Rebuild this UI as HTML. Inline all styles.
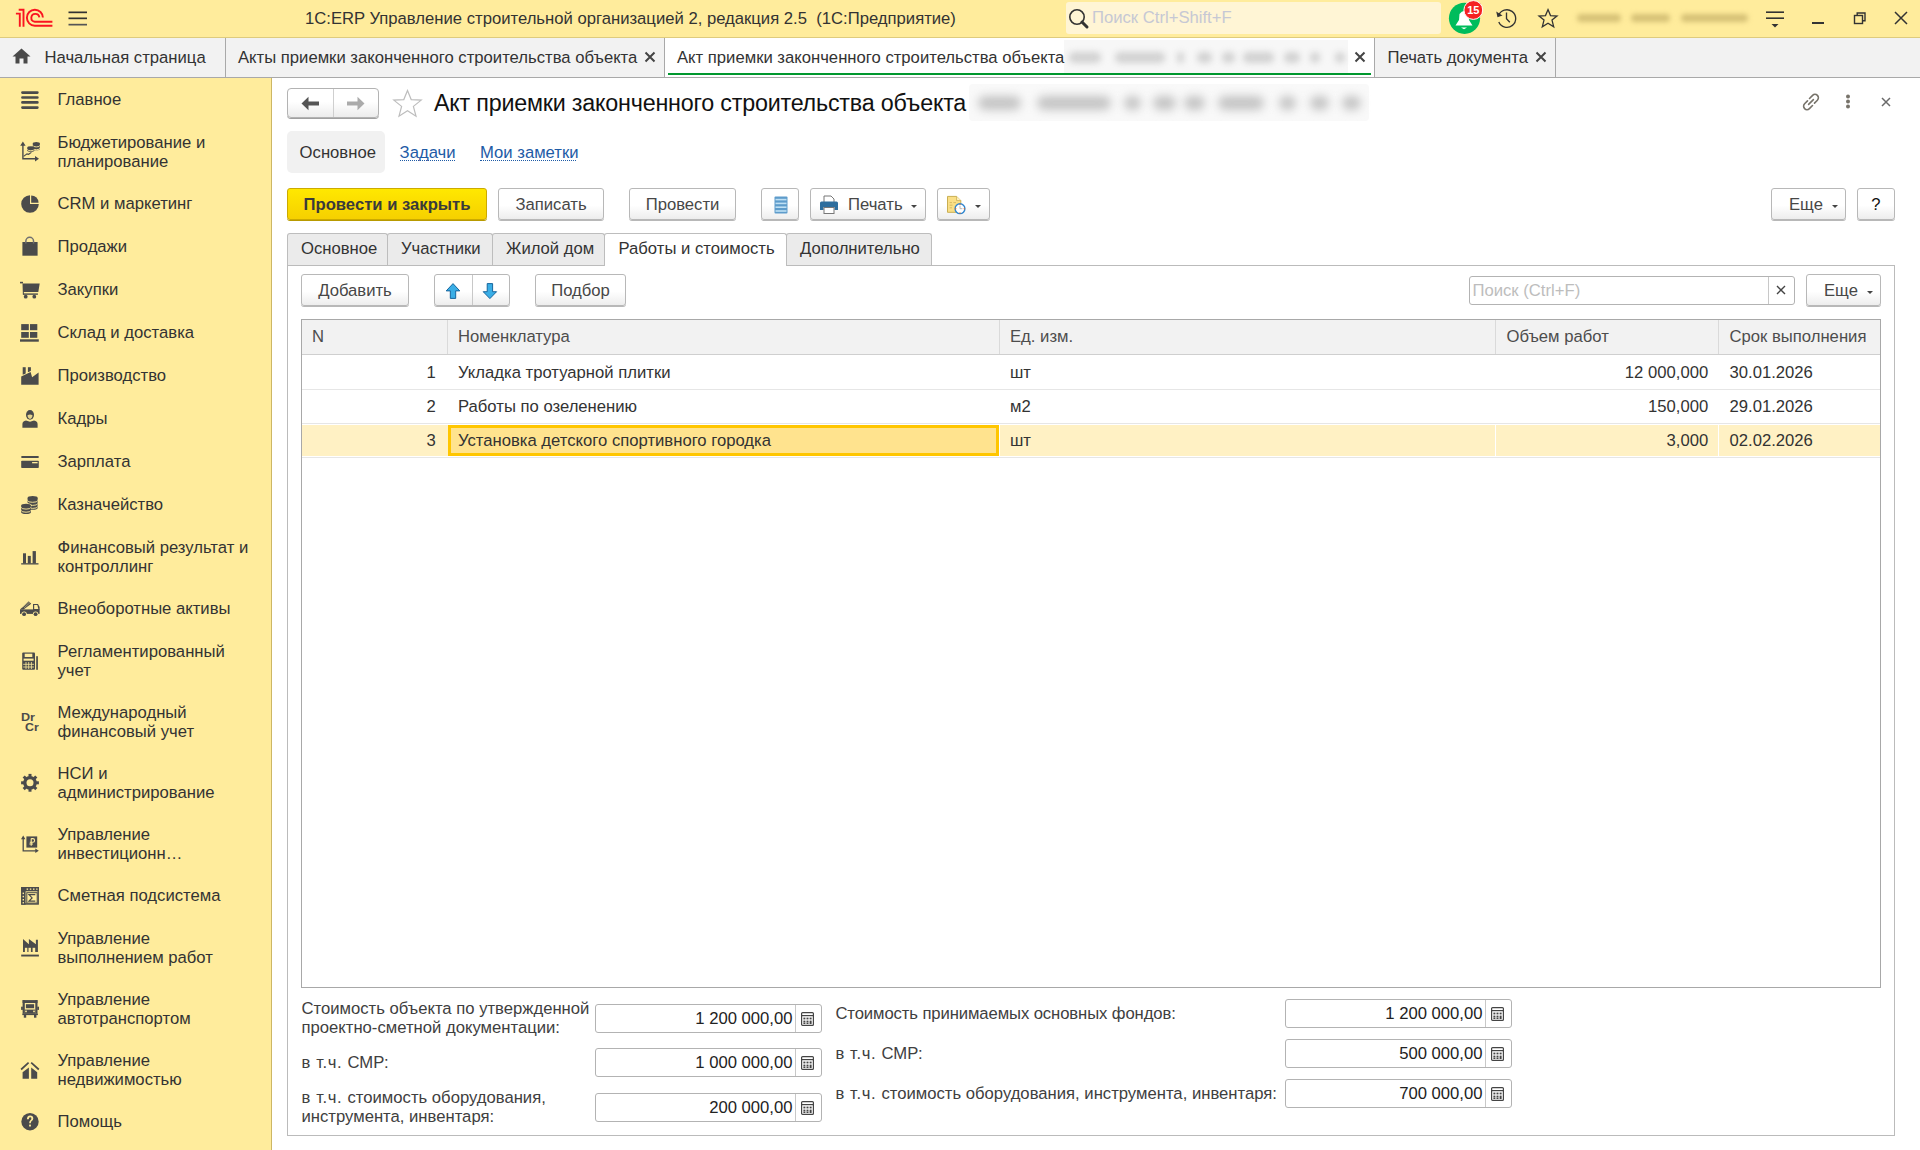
<!DOCTYPE html>
<html><head><meta charset="utf-8">
<style>
*{box-sizing:border-box}
html,body{margin:0;padding:0}
body{width:1920px;height:1150px;position:relative;overflow:hidden;font-family:"Liberation Sans",sans-serif;font-size:16.67px;color:#333;background:#fff}
.a{position:absolute;white-space:nowrap}
.t{position:absolute;white-space:nowrap;line-height:19px}
#top{position:absolute;left:0;top:0;width:1920px;height:38px;background:#FFEC9C;border-bottom:1px solid #DECB7E}
#tabs{position:absolute;left:0;top:38px;width:1920px;height:40px;background:#F2F2F2;border-bottom:1px solid #A9A9A9}
.tdiv{position:absolute;top:0;width:1px;height:39px;background:#A9A9A9}
#side{position:absolute;left:0;top:78px;width:272px;height:1072px;background:#FFEC9C;border-right:1px solid #CDB765}
.btn{position:absolute;height:33px;border:1px solid #B8B8B8;border-radius:3px;background:linear-gradient(#fff 0%,#fff 55%,#EDEDED 100%);box-shadow:0 1px 0.6px rgba(0,0,0,0.28);color:#474747}
.btn .l{position:absolute;top:6px;line-height:19px;white-space:nowrap}
.sl{position:absolute;left:57.5px;line-height:18.8px;color:#333;white-space:nowrap}
.tab{position:absolute;top:233px;height:32px;background:#EBEBEB;border:1px solid #BDBDBD;border-bottom:none;border-radius:3px 3px 0 0;color:#333}
.tab .l{position:absolute;top:4.5px;line-height:19px;white-space:nowrap}
.tab.act{background:#fff;height:33px;z-index:2}
.hd{color:#4D4D4D}
.rw{color:#333}
.fl{color:#404040}
.inp{position:absolute;height:29px;border:1px solid #B3B3B3;border-radius:3px;background:#fff}
.inp .v{position:absolute;top:4px;line-height:19px;white-space:nowrap;color:#222}
.inp .cd{position:absolute;right:25px;top:0;width:1px;height:27px;background:#C8C8C8}
.dd{position:absolute;width:0;height:0;border-left:3px solid transparent;border-right:3px solid transparent;border-top:3px solid #444}
</style></head>
<body>

<!-- TOP BAR -->
<div id="top">
  <svg class="a" style="left:0;top:0" width="60" height="37" viewBox="0 0 60 37">
    <g fill="none" stroke="#FA1420" stroke-width="1.9" stroke-linejoin="miter">
      <path d="M15.9 13.6 H19.8 V26.7"/>
      <path d="M18.7 9.8 H23.5 V26.7"/>
      <path d="M42.9 17.6 A8 8 0 1 0 34.8 25.7 H52.4"/>
      <path d="M39.3 17.4 A4 4 0 1 0 34.8 21.8 H52.4"/>
    </g>
  </svg>
  <svg class="a" style="left:68px;top:10px" width="20" height="16" viewBox="0 0 20 16">
    <rect x="0.5" y="1.5" width="18.5" height="1.7" fill="#333"/>
    <rect x="0.5" y="7.5" width="18.5" height="1.7" fill="#333"/>
    <rect x="0.5" y="13.8" width="18.5" height="1.7" fill="#555"/>
  </svg>
  <div class="a" style="left:305px;top:9px;line-height:19px;white-space:pre;color:#333">1С:ERP Управление строительной организацией 2, редакция 2.5  (1С:Предприятие)</div>
  <div class="a" style="left:1066px;top:2px;width:375px;height:32px;background:#FFF5D5;border-radius:3px"></div>
  <svg class="a" style="left:1068px;top:8px" width="22" height="22" viewBox="0 0 22 22">
    <circle cx="9" cy="9" r="7.2" fill="none" stroke="#333" stroke-width="1.6"/>
    <path d="M14 14 L19 19" stroke="#333" stroke-width="3" stroke-linecap="round"/>
  </svg>
  <div class="a" style="left:1092px;top:8px;line-height:19px;color:#C6C8D4">Поиск Ctrl+Shift+F</div>

  <svg class="a" style="left:1446px;top:0px" width="40" height="37" viewBox="0 0 40 37">
    <circle cx="18.5" cy="18.3" r="15.6" fill="#00BC5C"/>
    <path d="M9.5 25.5 L13 20 L13.5 14 Q18 8 22.5 14 L23 20 L26.5 25.5 Z" fill="#fff"/>
    <path d="M15 27.5 L21 27.5 L18 29.2 Z" fill="#fff"/>
    <circle cx="27.3" cy="10" r="9.4" fill="#F52222" stroke="#fff" stroke-width="1"/>
    <text x="27.3" y="14.2" text-anchor="middle" font-family="Liberation Sans" font-weight="bold" font-size="11" fill="#fff">15</text>
  </svg>
  <svg class="a" style="left:1494px;top:6px" width="24" height="24" viewBox="0 0 24 24">
    <path d="M4.6 9.6 A8.8 8.8 0 1 1 4.8 16" fill="none" stroke="#333" stroke-width="1.35"/>
    <path d="M2.2 5.5 L3.5 11.2 L8.5 9.5 Z" fill="#333"/>
    <path d="M12.5 6.6 L12.5 12.8 L15.8 16.3" fill="none" stroke="#333" stroke-width="1.35"/>
  </svg>
  <svg class="a" style="left:1537px;top:7px" width="22" height="22" viewBox="0 0 22 22">
    <path d="M11 2.6 L13.5 8.6 L20 9 L15 13.1 L16.7 19.9 L11 16.3 L5.3 19.9 L7 13.1 L2 9 L8.5 8.6 Z" fill="none" stroke="#333" stroke-width="1.3" stroke-linejoin="miter"/>
  </svg>
  <div class="a" style="left:1577px;top:14px;width:44px;height:8px;background:#D6C176;border-radius:4px;filter:blur(2.6px)"></div>
  <div class="a" style="left:1631px;top:14px;width:39px;height:8px;background:#D6C176;border-radius:4px;filter:blur(2.6px)"></div>
  <div class="a" style="left:1681px;top:14px;width:67px;height:8px;background:#D6C176;border-radius:4px;filter:blur(2.6px)"></div>
  <svg class="a" style="left:1764px;top:9px" width="22" height="22" viewBox="0 0 22 22">
    <rect x="2" y="2.4" width="18" height="1.6" fill="#333"/>
    <rect x="2" y="8.4" width="18" height="1.6" fill="#333"/>
    <path d="M7.5 15 L14.5 15 L11 18.6 Z" fill="#333"/>
  </svg>
  <div class="a" style="left:1812px;top:22.3px;width:11.5px;height:1.3px;background:#333"></div>
  <svg class="a" style="left:1852px;top:10px" width="16" height="16" viewBox="0 0 16 16">
    <rect x="2.5" y="5.5" width="8" height="8" fill="none" stroke="#333" stroke-width="1.4"/>
    <path d="M5.2 5.2 L5.2 3 L13 3 L13 10.8 L10.8 10.8" fill="none" stroke="#333" stroke-width="1.4"/>
  </svg>
  <svg class="a" style="left:1892px;top:10px" width="18" height="16" viewBox="0 0 18 16">
    <path d="M3 2 L15 14 M15 2 L3 14" stroke="#333" stroke-width="1.5"/>
  </svg>
</div>

<!-- TAB BAR -->
<div id="tabs">
  <svg class="a" style="left:12px;top:10px" width="19" height="16" viewBox="0 0 19 16">
    <path d="M9.5 0.5 L18.5 8.5 L15.5 8.5 L15.5 15.5 L11.5 15.5 L11.5 10.5 L7.5 10.5 L7.5 15.5 L3.5 15.5 L3.5 8.5 L0.5 8.5 Z" fill="#4A4A4A"/>
  </svg>
  <div class="t" style="left:44.5px;top:10px">Начальная страница</div>
  <div class="tdiv" style="left:225px"></div>
  <div class="t" style="left:238px;top:10px">Акты приемки законченного строительства объекта</div>
  <svg class="a" style="left:644px;top:13px" width="12" height="12" viewBox="0 0 12 12"><path d="M1.5 1.5 L10.5 10.5 M10.5 1.5 L1.5 10.5" stroke="#444" stroke-width="2"/></svg>
  <div class="tdiv" style="left:664px"></div>
  <div class="a" style="left:665px;top:0;width:709px;height:39px;background:#fff"></div>
  <div class="a" style="left:1064px;top:2px;width:284px;height:33px;background:#F7F7F7"></div>
  <div class="a" style="left:1069px;top:14px;width:32px;height:11px;background:#D2D2D2;border-radius:5px;filter:blur(3.4px)"></div><div class="a" style="left:1115px;top:14px;width:50px;height:11px;background:#D2D2D2;border-radius:5px;filter:blur(3.4px)"></div><div class="a" style="left:1177px;top:14px;width:7px;height:11px;background:#D2D2D2;border-radius:5px;filter:blur(3.4px)"></div><div class="a" style="left:1197px;top:14px;width:15px;height:11px;background:#D2D2D2;border-radius:5px;filter:blur(3.4px)"></div><div class="a" style="left:1222px;top:14px;width:13px;height:11px;background:#D2D2D2;border-radius:5px;filter:blur(3.4px)"></div><div class="a" style="left:1243px;top:14px;width:31px;height:11px;background:#D2D2D2;border-radius:5px;filter:blur(3.4px)"></div><div class="a" style="left:1284px;top:14px;width:16px;height:11px;background:#D2D2D2;border-radius:5px;filter:blur(3.4px)"></div><div class="a" style="left:1310px;top:14px;width:10px;height:11px;background:#D2D2D2;border-radius:5px;filter:blur(3.4px)"></div><div class="a" style="left:1335px;top:14px;width:10px;height:11px;background:#D2D2D2;border-radius:5px;filter:blur(3.4px)"></div>
  <div class="a" style="left:668px;top:35px;width:703px;height:2px;background:#00982F"></div>
  <div class="t" style="left:677px;top:10px">Акт приемки законченного строительства объекта</div>
  
  
  <svg class="a" style="left:1354px;top:13px" width="12" height="12" viewBox="0 0 12 12"><path d="M1.5 1.5 L10.5 10.5 M10.5 1.5 L1.5 10.5" stroke="#444" stroke-width="2"/></svg>
  <div class="tdiv" style="left:1374px"></div>
  <div class="t" style="left:1387.5px;top:10px">Печать документа</div>
  <svg class="a" style="left:1535px;top:13px" width="12" height="12" viewBox="0 0 12 12"><path d="M1.5 1.5 L10.5 10.5 M10.5 1.5 L1.5 10.5" stroke="#444" stroke-width="2"/></svg>
  <div class="tdiv" style="left:1555px"></div>
</div>

<!-- SIDEBAR -->
<div id="side">
<div class="sl" style="top:13.3px">Главное</div>
<div class="sl" style="top:56.3px">Бюджетирование и<br>планирование</div>
<div class="sl" style="top:117.3px">CRM и маркетинг</div>
<div class="sl" style="top:160.3px">Продажи</div>
<div class="sl" style="top:203.3px">Закупки</div>
<div class="sl" style="top:246.3px">Склад и доставка</div>
<div class="sl" style="top:289.3px">Производство</div>
<div class="sl" style="top:332.3px">Кадры</div>
<div class="sl" style="top:375.3px">Зарплата</div>
<div class="sl" style="top:418.3px">Казначейство</div>
<div class="sl" style="top:461.3px">Финансовый результат и<br>контроллинг</div>
<div class="sl" style="top:522.3px">Внеоборотные активы</div>
<div class="sl" style="top:565.3px">Регламентированный<br>учет</div>
<div class="sl" style="top:626.3px">Международный<br>финансовый учет</div>
<div class="sl" style="top:687.3px">НСИ и<br>администрирование</div>
<div class="sl" style="top:748.3px">Управление<br>инвестиционн…</div>
<div class="sl" style="top:809.3px">Сметная подсистема</div>
<div class="sl" style="top:852.3px">Управление<br>выполнением работ</div>
<div class="sl" style="top:913.3px">Управление<br>автотранспортом</div>
<div class="sl" style="top:974.3px">Управление<br>недвижимостью</div>
<div class="sl" style="top:1035.3px">Помощь</div>
<svg class="a" style="left:0;top:-78px" width="60" height="1150" viewBox="0 0 60 1150" fill="#4B4B4B"><path d="M22.4 92.6 H37.4 M22.4 97.5 H37.4 M22.4 102.4 H37.4 M22.4 107.6 H37.4" stroke="#4B4B4B" stroke-width="2.6" stroke-linecap="round"/>
<path d="M22.9 145 V158.7 H35.5" fill="none" stroke="#4B4B4B" stroke-width="1.4"/><path d="M22.9 141.6 L20.2 145.8 H25.6 Z M39 158.7 L35 155.9 V161.5 Z"/><path d="M23.6 156.4 L27 153.9 L28.6 154.3 L31.4 152.4" fill="none" stroke="#4B4B4B" stroke-width="1.1"/><ellipse cx="36.30" cy="143.40" rx="3.50" ry="1.50"/><rect x="32.80" y="143.40" width="7.00" height="5.40"/><ellipse cx="36.30" cy="148.80" rx="3.50" ry="1.50"/><path d="M32.80 145.40 A3.50 1.50 0 0 0 39.80 145.40" fill="none" stroke="#FFEC9C" stroke-width="0.9"/><path d="M32.80 148.20 A3.50 1.50 0 0 0 39.80 148.20" fill="none" stroke="#FFEC9C" stroke-width="0.9"/><ellipse cx="30.80" cy="147.70" rx="3.50" ry="1.40"/><rect x="27.30" y="147.70" width="7.00" height="2.70"/><ellipse cx="30.80" cy="150.40" rx="3.50" ry="1.40"/><path d="M27.30 149.30 A3.50 1.40 0 0 0 34.30 149.30" fill="none" stroke="#FFEC9C" stroke-width="0.9"/>
<path d="M30 204 V195.2 A8.8 8.8 0 1 0 38.8 204 Z"/><path d="M31.2 202.8 V195.4 A7.4 7.4 0 0 1 38.6 202.8 Z"/>
<rect x="22.4" y="242" width="15.2" height="13.7"/><path d="M25.85 243.5 V241.2 A3.85 3.85 0 0 1 33.55 241.2 V243.5" fill="none" stroke="#707070" stroke-width="1.5"/>
<path d="M20 282.6 H23" stroke="#4B4B4B" stroke-width="1.6"/><path d="M22.5 283.4 H39.7 L38.3 292.1 H23.8 L24 294.6 H22.9 Z"/><rect x="22.9" y="293.4" width="15" height="1.4"/><circle cx="25.7" cy="296.7" r="1.9"/><circle cx="34.3" cy="296.7" r="1.9"/>
<rect x="21.2" y="324.1" width="7.6" height="6.1"/><rect x="30" y="324.1" width="7.3" height="6.1"/><rect x="21.2" y="332" width="7.6" height="5.8"/><rect x="30" y="332" width="7.3" height="5.8"/><rect x="20" y="339.3" width="18.8" height="2.4"/>
<rect x="22.7" y="367.2" width="3" height="7.5"/><rect x="27.9" y="367.2" width="3" height="5"/><path d="M21.2 376.6 L30.6 372 L32.1 377.2 L38.6 372.6" fill="none" stroke="#FFEC9C" stroke-width="1.6"/><path d="M21.2 376.6 L30.6 372 L32.1 377.2 L38.6 372.6 V384.8 H21.2 Z"/>
<ellipse cx="30" cy="414.9" rx="4" ry="4.85"/><path d="M27.5 415.2 Q30 413.6 32.5 415.2 Q32.3 418.6 30 418.9 Q27.7 418.6 27.5 415.2 Z" fill="#E6D48C"/><path d="M22.4 427.7 V424.2 Q22.4 420.8 26 420.4 L30 421.8 L34 420.4 Q37.6 420.8 37.6 424.2 V427.7 Z"/>
<rect x="21.2" y="455.9" width="17.6" height="2.1" rx="0.8"/><rect x="21.2" y="460.8" width="17.6" height="7.3" rx="0.8"/><rect x="32.1" y="462" width="5.5" height="1.3" fill="#FFEC9C"/>
<ellipse cx="32.60" cy="497.90" rx="5.00" ry="1.80"/><rect x="27.60" y="497.90" width="10.00" height="10.10"/><ellipse cx="32.60" cy="508.00" rx="5.00" ry="1.80"/><path d="M27.60 500.50 A5.00 1.80 0 0 0 37.60 500.50" fill="none" stroke="#FFEC9C" stroke-width="0.9"/><path d="M27.60 503.60 A5.00 1.80 0 0 0 37.60 503.60" fill="none" stroke="#FFEC9C" stroke-width="0.9"/><path d="M27.60 506.60 A5.00 1.80 0 0 0 37.60 506.60" fill="none" stroke="#FFEC9C" stroke-width="0.9"/><ellipse cx="26.05" cy="505.5" rx="5.6" ry="2.4" fill="#FFEC9C"/><ellipse cx="26.05" cy="505.50" rx="4.85" ry="1.80"/><rect x="21.20" y="505.50" width="9.70" height="6.70"/><ellipse cx="26.05" cy="512.20" rx="4.85" ry="1.80"/><path d="M21.20 507.30 A4.85 1.80 0 0 0 30.90 507.30" fill="none" stroke="#FFEC9C" stroke-width="0.9"/><path d="M21.20 510.40 A4.85 1.80 0 0 0 30.90 510.40" fill="none" stroke="#FFEC9C" stroke-width="0.9"/>
<rect x="23" y="553.3" width="3" height="10.2"/><rect x="27.8" y="555.9" width="3" height="7.6"/><rect x="32.6" y="551.1" width="3.3" height="12.4"/><rect x="21.2" y="563.2" width="17.3" height="1.3"/>
<rect x="20" y="609.4" width="19.6" height="4.5"/><path d="M33 603.9 H38 L39.6 607 V610 H33 Z"/><path d="M34.2 605.1 H37.3 L38.3 608.9 H34.2 Z" fill="#FFEC9C"/><path d="M20 609.6 L28.6 601.3 L31.2 603.8 L23.6 609.6 Z"/><path d="M22.4 607.4 L29 601.6 M24.2 607.8 L30 602.6" stroke="#FFEC9C" stroke-width="0.5"/><circle cx="24.1" cy="614.2" r="2.7" fill="#FFEC9C"/><circle cx="24.1" cy="614.2" r="1.9"/><circle cx="35.6" cy="614.2" r="2.7" fill="#FFEC9C"/><circle cx="35.6" cy="614.2" r="1.9"/>
<rect x="22.2" y="652.4" width="12.8" height="17.4" rx="1"/><rect x="24.7" y="653.7" width="7.6" height="3.3" fill="#FFEC9C"/><rect x="23.6" y="658.6" width="10" height="2.1" fill="#FFEC9C"/><path d="M23.2 664.3 H34 M23.2 667 H34 M26 662 V669 M28.7 662 V669 M31.4 662 V669" stroke="#FFEC9C" stroke-width="0.8"/><rect x="36.2" y="656.2" width="1.7" height="13.6"/>
<text x="21" y="720.8" font-family="Liberation Sans" font-weight="bold" font-size="10" textLength="14" lengthAdjust="spacingAndGlyphs">Dr</text><text x="25" y="730.7" font-family="Liberation Sans" font-weight="bold" font-size="10" textLength="13.8" lengthAdjust="spacingAndGlyphs">Cr</text>
<circle cx="30" cy="782.8" r="6.9"/><rect x="28.5" y="773.9" width="3" height="4" transform="rotate(0 30 782.8)"/><rect x="28.5" y="773.9" width="3" height="4" transform="rotate(45 30 782.8)"/><rect x="28.5" y="773.9" width="3" height="4" transform="rotate(90 30 782.8)"/><rect x="28.5" y="773.9" width="3" height="4" transform="rotate(135 30 782.8)"/><rect x="28.5" y="773.9" width="3" height="4" transform="rotate(180 30 782.8)"/><rect x="28.5" y="773.9" width="3" height="4" transform="rotate(225 30 782.8)"/><rect x="28.5" y="773.9" width="3" height="4" transform="rotate(270 30 782.8)"/><rect x="28.5" y="773.9" width="3" height="4" transform="rotate(315 30 782.8)"/><circle cx="30" cy="782.8" r="3.5" fill="#FFEC9C"/>
<path d="M23.2 838.6 V850.8 H36" fill="none" stroke="#4B4B4B" stroke-width="1.3"/><path d="M23.2 835.6 L21 839.2 H25.4 Z M38.8 850.8 L35.3 848.5 V853.1 Z"/><rect x="26.4" y="836.4" width="10.8" height="11.2"/><path d="M31.2 838.6 V845.8 M31.2 838.6 H32.8 Q34.6 838.6 34.6 840.4 Q34.6 842.2 32.8 842.2 H29.8 M29.4 844 H33" fill="none" stroke="#FFEC9C" stroke-width="1.1"/>
<rect x="21.95" y="887.75" width="16.2" height="16.2" fill="none" stroke="#4B4B4B" stroke-width="1.5"/><rect x="21.2" y="887" width="17.7" height="4.3"/><rect x="21.2" y="887" width="4.4" height="17.7"/><g fill="#FFEC9C"><rect x="26.6" y="888.5" width="1.5" height="1.3"/><rect x="29.8" y="888.5" width="1.5" height="1.3"/><rect x="33" y="888.5" width="1.5" height="1.3"/><rect x="36.2" y="888.5" width="1.3" height="1.3"/><rect x="22.6" y="892.6" width="1.4" height="1.5"/><rect x="22.6" y="895.8" width="1.4" height="1.5"/><rect x="22.6" y="899" width="1.4" height="1.5"/><rect x="22.6" y="902.1" width="1.4" height="1.3"/></g><rect x="26.8" y="892.7" width="10.4" height="10.4" fill="#FFEC9C" stroke="#4B4B4B" stroke-width="1"/><path d="M35.3 894.7 H29 L32.1 897.9 L29 901.1 H35.3" fill="none" stroke="#4B4B4B" stroke-width="1.2"/>
<path d="M23 952 V939 L28.9 944.3 V939 L35.9 944.3 V939.8 H37.9 V952 Z"/><rect x="24.9" y="947.8" width="2.4" height="4.2" fill="#FFEC9C"/><rect x="28.5" y="947.8" width="2.4" height="4.2" fill="#FFEC9C"/><rect x="32.6" y="947.8" width="2.6" height="4.2" fill="#FFEC9C"/><rect x="21.2" y="954.6" width="17.7" height="1.9"/>
<rect x="22.6" y="1000.1" width="14.9" height="2.9"/><rect x="22.6" y="1000.1" width="2.2" height="13.7"/><rect x="35.3" y="1000.1" width="2.2" height="13.7"/><rect x="21.1" y="1006.7" width="1.8" height="3.2"/><rect x="37.2" y="1006.7" width="1.8" height="3.2"/><rect x="25.9" y="1004.2" width="8.2" height="4"/><rect x="24.6" y="1009.6" width="10.8" height="4.2"/><rect x="25.2" y="1010.6" width="1.6" height="1.6" fill="#FFEC9C"/><rect x="33.2" y="1010.6" width="1.6" height="1.6" fill="#FFEC9C"/><rect x="22.3" y="1013.6" width="15.6" height="1.5"/><rect x="23.8" y="1015" width="2.4" height="2.7"/><rect x="34" y="1015" width="2.4" height="2.7"/>
<path d="M21.1 1069.5 L28.6 1062.6 M31.2 1062.6 L38.8 1069.5" stroke="#4B4B4B" stroke-width="1.7"/><path d="M22.6 1072.2 L28.9 1067.5 V1078.7 H22.6 Z"/><path d="M31.2 1067.5 L37.2 1072.2 V1078.7 H31.2 Z"/>
<circle cx="30" cy="1121.7" r="8.7"/><path d="M26.9 1119.2 Q26.9 1115.4 30.1 1115.4 Q33.3 1115.4 33.3 1118.4 Q33.3 1120.1 31.5 1121.2 Q30.8 1121.7 30.8 1123.3 H29.2 Q29.1 1121.2 30.4 1120.2 Q31.4 1119.5 31.4 1118.5 Q31.4 1117.2 30.1 1117.2 Q28.8 1117.2 28.8 1119.2 Z" fill="#FFEC9C"/><rect x="29.1" y="1124.6" width="1.8" height="1.9" fill="#FFEC9C"/></svg>
</div>

<!-- CONTENT -->
<!-- header row -->
<div class="a" style="left:287px;top:88px;width:92px;height:30px;border:1px solid #B3B3B3;border-radius:4px;background:linear-gradient(#fff 45%,#ECECEC);box-shadow:0 1px 0 #A0A0A0"></div>
<div class="a" style="left:333px;top:89px;width:1px;height:28px;background:#CFCFCF"></div>
<svg class="a" style="left:301px;top:96px" width="19" height="15" viewBox="0 0 19 15"><path d="M0.5 7.5 L7.5 0.8 V5.6 H18 V9.4 H7.5 V14.2 Z" fill="#555"/></svg>
<svg class="a" style="left:346px;top:96px" width="19" height="15" viewBox="0 0 19 15"><path d="M18.5 7.5 L11.5 0.8 V5.6 H1 V9.4 H11.5 V14.2 Z" fill="#ABABAB"/></svg>
<svg class="a" style="left:392px;top:89px" width="31" height="29" viewBox="0 0 31 29"><path d="M15.5 1.5 L19.2 10.6 L29.2 11.1 L21.4 17.4 L24 27.2 L15.5 21.7 L7 27.2 L9.6 17.4 L1.8 11.1 L11.8 10.6 Z" fill="none" stroke="#BDBDBD" stroke-width="1.2" stroke-linejoin="miter"/></svg>
<div class="a" style="left:434px;top:90px;font-size:23.3px;line-height:27px;color:#111;letter-spacing:-0.21px">Акт приемки законченного строительства объекта</div>
<div class="a" style="left:969px;top:84px;width:400px;height:37px;background:#F9F9F9;border-radius:4px"></div>

<div class="a" style="left:978px;top:96px;width:43px;height:14px;background:#C4C4C4;border-radius:7px;filter:blur(4.8px)"></div><div class="a" style="left:1037px;top:96px;width:74px;height:14px;background:#C4C4C4;border-radius:7px;filter:blur(4.8px)"></div><div class="a" style="left:1124px;top:96px;width:17px;height:14px;background:#C4C4C4;border-radius:7px;filter:blur(4.8px)"></div><div class="a" style="left:1153px;top:96px;width:23px;height:14px;background:#C4C4C4;border-radius:7px;filter:blur(4.8px)"></div><div class="a" style="left:1184px;top:96px;width:21px;height:14px;background:#C4C4C4;border-radius:7px;filter:blur(4.8px)"></div><div class="a" style="left:1218px;top:96px;width:46px;height:14px;background:#C4C4C4;border-radius:7px;filter:blur(4.8px)"></div><div class="a" style="left:1279px;top:96px;width:17px;height:14px;background:#C4C4C4;border-radius:7px;filter:blur(4.8px)"></div><div class="a" style="left:1310px;top:96px;width:19px;height:14px;background:#C4C4C4;border-radius:7px;filter:blur(4.8px)"></div><div class="a" style="left:1342px;top:96px;width:19px;height:14px;background:#C4C4C4;border-radius:7px;filter:blur(4.8px)"></div>
<svg class="a" style="left:1800px;top:91px" width="22" height="22" viewBox="0 0 22 22"><g fill="none" stroke="#77736A" stroke-width="1.6" stroke-linecap="round"><path d="M9.5 7.5 L12.6 4.4 A3.3 3.3 0 0 1 17.4 9.2 L14.5 12.1"/><path d="M12.5 14.5 L9.4 17.6 A3.3 3.3 0 0 1 4.6 12.8 L7.5 9.9"/><path d="M8.6 13.4 L13.4 8.6"/></g></svg>
<svg class="a" style="left:1845px;top:94px" width="6" height="16" viewBox="0 0 6 16"><circle cx="3" cy="2.6" r="2" fill="#77736A"/><circle cx="3" cy="7.6" r="2" fill="#77736A"/><circle cx="3" cy="12.6" r="2" fill="#77736A"/></svg>
<svg class="a" style="left:1880px;top:96px" width="12" height="12" viewBox="0 0 12 12"><path d="M2 2 L10 10 M10 2 L2 10" stroke="#6a6a6a" stroke-width="1.5"/></svg>

<!-- sub tabs -->
<div class="a" style="left:287px;top:131px;width:98px;height:42px;background:#F1F1F1;border-radius:5px"></div>
<div class="t" style="left:299.6px;top:142.5px;color:#333">Основное</div>
<div class="t" style="left:399.6px;top:142.5px;color:#1E5BA6">Задачи</div>
<div class="a" style="left:399.6px;top:160px;width:55px;height:0;border-top:1px dotted #1E5BA6"></div>
<div class="t" style="left:480px;top:142.5px;color:#1E5BA6">Мои заметки</div>
<div class="a" style="left:480px;top:160px;width:96px;height:0;border-top:1px dotted #1E5BA6"></div>

<!-- command bar -->
<div class="btn" style="left:287px;top:188px;width:200px;height:32px;border-color:#CCAA00;background:linear-gradient(#FFE800,#F6D000);box-shadow:0 1px 0 #B89A00"><div class="l" style="left:0;width:198px;text-align:center;font-weight:bold;color:#3A3A3A">Провести и закрыть</div></div>
<div class="btn" style="left:498px;top:188px;width:106px;height:32px"><div class="l" style="left:0;width:104px;text-align:center">Записать</div></div>
<div class="btn" style="left:629px;top:188px;width:107px;height:32px"><div class="l" style="left:0;width:105px;text-align:center">Провести</div></div>
<div class="btn" style="left:761px;top:188px;width:38px;height:32px">
  <svg class="a" style="left:12px;top:7px" width="14" height="18" viewBox="0 0 14 18"><rect x="0.5" y="0.5" width="13" height="17" rx="1" fill="#5E9CCB"/><g fill="#BFE0F4"><rect x="1.5" y="2.8" width="11" height="1.6"/><rect x="1.5" y="6.6" width="11" height="1.6"/><rect x="1.5" y="10.4" width="11" height="1.6"/><rect x="1.5" y="14.2" width="11" height="1.6"/></g></svg>
</div>
<div class="btn" style="left:810px;top:188px;width:116px;height:32px">
  <svg class="a" style="left:8px;top:6px" width="20" height="20" viewBox="0 0 20 20"><path d="M5 1 H12 L15 4 V8 H5 Z" fill="#fff" stroke="#777" stroke-width="1"/><path d="M1 8 Q1 6.5 2.5 6.5 H17.5 Q19 6.5 19 8 V15 H15.5 V12 H4.5 V15 H1 Z" fill="#2D6E9E"/><rect x="5" y="12.5" width="10" height="6" fill="#fff" stroke="#777" stroke-width="1"/></svg>
  <div class="l" style="left:37px">Печать</div>
  <div class="dd" style="left:100px;top:15.5px"></div>
</div>
<div class="btn" style="left:937px;top:188px;width:53px;height:32px">
  <svg class="a" style="left:7px;top:5px" width="22" height="22" viewBox="0 0 22 22"><path d="M2.5 2.4 H11.6 L15.8 6.6 V18.3 H2.5 Z" fill="#FADF86" stroke="#C9AE52" stroke-width="1"/><path d="M11.6 2.4 V6.6 H15.8" fill="#FFF2C0" stroke="#C9AE52" stroke-width="0.8"/><path d="M4.6 8.6 H7 M8.4 8.6 H11 M4.6 11.2 H7.5 M4.6 13.8 H7" stroke="#D4B860" stroke-width="0.9"/><circle cx="15" cy="14.7" r="4.9" fill="#fff" stroke="#2F86CF" stroke-width="1.4"/><path d="M15 11.6 V14.7 H17.4" stroke="#B0B0B0" stroke-width="0.9" fill="none"/><circle cx="15" cy="10.4" r="0.7" fill="#E06A28"/><circle cx="15" cy="19" r="0.7" fill="#E06A28"/><circle cx="10.7" cy="14.7" r="0.7" fill="#E06A28"/><circle cx="19.3" cy="14.7" r="0.7" fill="#E06A28"/></svg>
  <div class="dd" style="left:37px;top:15.5px"></div>
</div>
<div class="btn" style="left:1771px;top:188px;width:75px;height:32px"><div class="l" style="left:17px">Еще</div><div class="dd" style="left:60px;top:15.5px"></div></div>
<div class="btn" style="left:1857px;top:188px;width:38px;height:32px"><div class="l" style="left:0;width:36px;text-align:center;color:#111">?</div></div>

<!-- form tabs -->
<div class="a" style="left:287px;top:265px;width:1608px;height:871px;border:1px solid #BBBBBB"></div>
<div class="tab" style="left:287px;width:101px"><div class="l" style="left:13px">Основное</div></div>
<div class="tab" style="left:387px;width:106px"><div class="l" style="left:13px">Участники</div></div>
<div class="tab" style="left:492px;width:113px"><div class="l" style="left:13px">Жилой дом</div></div>
<div class="tab act" style="left:604px;width:183px"><div class="l" style="left:13.5px">Работы и стоимость</div></div>
<div class="tab" style="left:786px;width:146px"><div class="l" style="left:13px">Дополнительно</div></div>

<!-- table toolbar -->
<div class="btn" style="left:301px;top:274px;width:108px;height:32px"><div class="l" style="left:0;width:106px;text-align:center">Добавить</div></div>
<div class="btn" style="left:434px;top:274px;width:76px;height:32px"></div>
<div class="a" style="left:472px;top:275px;width:1px;height:30px;background:#C8C8C8"></div>
<svg class="a" style="left:0;top:0;z-index:3" width="520" height="310" viewBox="0 0 520 310"><path d="M453 283.6 L459.8 290.9 H455.7 V298.4 H450.3 V290.9 H446.2 Z" fill="#3AAEE6" stroke="#0B5A94" stroke-width="0.9" stroke-linejoin="round"/><path d="M489.9 298.6 L496.6 291.7 H492.6 V283.6 H487.2 V291.7 H483.2 Z" fill="#3AAEE6" stroke="#0B5A94" stroke-width="0.9" stroke-linejoin="round"/></svg>
<div class="btn" style="left:535px;top:274px;width:91px;height:32px"><div class="l" style="left:0;width:89px;text-align:center">Подбор</div></div>
<div class="a" style="left:1469px;top:276px;width:326px;height:29px;border:1px solid #B3B3B3;border-radius:3px;background:#fff"></div>
<div class="a" style="left:1768px;top:277px;width:1px;height:27px;background:#C8C8C8"></div>
<div class="t" style="left:1472.5px;top:281px;color:#BDBDBD">Поиск (Ctrl+F)</div>
<svg class="a" style="left:1775px;top:284px" width="12" height="12" viewBox="0 0 12 12"><path d="M2 2 L10 10 M10 2 L2 10" stroke="#444" stroke-width="1.4"/></svg>
<div class="btn" style="left:1806px;top:274px;width:75px;height:32px"><div class="l" style="left:17px">Еще</div><div class="dd" style="left:60px;top:15.5px"></div></div>

<!-- table -->
<div class="a" style="left:301px;top:319px;width:1580px;height:669px;border:1px solid #A8A8A8;background:#fff"></div>
<div class="a" style="left:302px;top:320px;width:1578px;height:35px;background:#F2F2F2;border-bottom:1px solid #CFCFCF"></div>
<div class="a" style="left:447px;top:320px;width:1px;height:34px;background:#DADADA"></div>
<div class="a" style="left:999px;top:320px;width:1px;height:34px;background:#DADADA"></div>
<div class="a" style="left:1495px;top:320px;width:1px;height:34px;background:#DADADA"></div>
<div class="a" style="left:1718px;top:320px;width:1px;height:34px;background:#DADADA"></div>
<div class="t hd" style="left:312px;top:326.5px">N</div>
<div class="t hd" style="left:458px;top:326.5px">Номенклатура</div>
<div class="t hd" style="left:1010px;top:326.5px">Ед. изм.</div>
<div class="t hd" style="left:1506.5px;top:326.5px">Объем работ</div>
<div class="t hd" style="left:1729.5px;top:326.5px">Срок выполнения</div>

<div class="a" style="left:302px;top:389px;width:1578px;height:1px;background:#E6E6E6"></div>
<div class="a" style="left:302px;top:423px;width:1578px;height:1px;background:#E6E6E6"></div>
<div class="a" style="left:302px;top:457px;width:1578px;height:1px;background:#E6E6E6"></div>
<div class="a" style="left:302px;top:425px;width:1578px;height:31px;background:#FFF1C4"></div>
<div class="a" style="left:999px;top:425px;width:1px;height:31px;background:#FFFFFF"></div>
<div class="a" style="left:1495px;top:425px;width:1px;height:31px;background:#FFFFFF"></div>
<div class="a" style="left:1718px;top:425px;width:1px;height:31px;background:#FFFFFF"></div>
<div class="a" style="left:448px;top:425px;width:551px;height:31px;border:3px solid #FFC600;background:#FFE38E"></div>

<div class="t rw" style="right:1484.3px;top:363px">1</div>
<div class="t rw" style="left:458px;top:363px">Укладка тротуарной плитки</div>
<div class="t rw" style="left:1010px;top:363px">шт</div>
<div class="t rw" style="right:211.8px;top:363px">12 000,000</div>
<div class="t rw" style="left:1729.5px;top:363px">30.01.2026</div>

<div class="t rw" style="right:1484.3px;top:397px">2</div>
<div class="t rw" style="left:458px;top:397px">Работы по озеленению</div>
<div class="t rw" style="left:1010px;top:397px">м2</div>
<div class="t rw" style="right:211.8px;top:397px">150,000</div>
<div class="t rw" style="left:1729.5px;top:397px">29.01.2026</div>

<div class="t rw" style="right:1484.3px;top:431px">3</div>
<div class="t rw" style="left:458px;top:431px">Установка детского спортивного городка</div>
<div class="t rw" style="left:1010px;top:431px">шт</div>
<div class="t rw" style="right:211.8px;top:431px">3,000</div>
<div class="t rw" style="left:1729.5px;top:431px">02.02.2026</div>

<!-- footer fields -->
<div class="t fl" style="left:301.5px;top:998.5px">Стоимость объекта по утвержденной<br>проектно-сметной документации:</div>
<div class="t fl" style="left:301.5px;top:1052.5px"><span style="letter-spacing:0.6px">в т.ч. </span>СМР:</div>
<div class="t fl" style="left:301.5px;top:1087.5px"><span style="letter-spacing:0.6px">в т.ч. </span>стоимость оборудования,<br>инструмента, инвентаря:</div>
<div class="inp" style="left:595px;top:1004px;width:227px"><div class="v" style="right:28.5px">1 200 000,00</div><div class="cd"></div><svg class="a" style="right:7px;top:7px" width="13" height="14" viewBox="0 0 13 14"><rect x="0.6" y="0.6" width="11.8" height="12.8" rx="1" fill="none" stroke="#444" stroke-width="1.2"/><rect x="0.6" y="3" width="11.8" height="1.2" fill="#444"/><g fill="#444"><rect x="2.4" y="5.6" width="2" height="1.8"/><rect x="5.5" y="5.6" width="2" height="1.8"/><rect x="8.6" y="5.6" width="2" height="1.8"/><rect x="2.4" y="8.6" width="2" height="1.8"/><rect x="5.5" y="8.6" width="2" height="1.8"/><rect x="8.6" y="8.6" width="2" height="3.4"/><rect x="2.4" y="10.6" width="2" height="1.4"/><rect x="5.5" y="10.6" width="2" height="1.4"/></g></svg></div>
<div class="inp" style="left:595px;top:1048px;width:227px"><div class="v" style="right:28.5px">1 000 000,00</div><div class="cd"></div><svg class="a" style="right:7px;top:7px" width="13" height="14" viewBox="0 0 13 14"><rect x="0.6" y="0.6" width="11.8" height="12.8" rx="1" fill="none" stroke="#444" stroke-width="1.2"/><rect x="0.6" y="3" width="11.8" height="1.2" fill="#444"/><g fill="#444"><rect x="2.4" y="5.6" width="2" height="1.8"/><rect x="5.5" y="5.6" width="2" height="1.8"/><rect x="8.6" y="5.6" width="2" height="1.8"/><rect x="2.4" y="8.6" width="2" height="1.8"/><rect x="5.5" y="8.6" width="2" height="1.8"/><rect x="8.6" y="8.6" width="2" height="3.4"/><rect x="2.4" y="10.6" width="2" height="1.4"/><rect x="5.5" y="10.6" width="2" height="1.4"/></g></svg></div>
<div class="inp" style="left:595px;top:1093px;width:227px"><div class="v" style="right:28.5px">200 000,00</div><div class="cd"></div><svg class="a" style="right:7px;top:7px" width="13" height="14" viewBox="0 0 13 14"><rect x="0.6" y="0.6" width="11.8" height="12.8" rx="1" fill="none" stroke="#444" stroke-width="1.2"/><rect x="0.6" y="3" width="11.8" height="1.2" fill="#444"/><g fill="#444"><rect x="2.4" y="5.6" width="2" height="1.8"/><rect x="5.5" y="5.6" width="2" height="1.8"/><rect x="8.6" y="5.6" width="2" height="1.8"/><rect x="2.4" y="8.6" width="2" height="1.8"/><rect x="5.5" y="8.6" width="2" height="1.8"/><rect x="8.6" y="8.6" width="2" height="3.4"/><rect x="2.4" y="10.6" width="2" height="1.4"/><rect x="5.5" y="10.6" width="2" height="1.4"/></g></svg></div>

<div class="t fl" style="left:835.4px;top:1004px;letter-spacing:-0.1px">Стоимость принимаемых основных фондов:</div>
<div class="t fl" style="left:835.4px;top:1043.5px"><span style="letter-spacing:0.6px">в т.ч. </span>СМР:</div>
<div class="t fl" style="left:835.4px;top:1083.5px"><span style="letter-spacing:0.6px">в т.ч. </span>стоимость оборудования, инструмента, инвентаря:</div>
<div class="inp" style="left:1285px;top:999px;width:227px"><div class="v" style="right:28.5px">1 200 000,00</div><div class="cd"></div><svg class="a" style="right:7px;top:7px" width="13" height="14" viewBox="0 0 13 14"><rect x="0.6" y="0.6" width="11.8" height="12.8" rx="1" fill="none" stroke="#444" stroke-width="1.2"/><rect x="0.6" y="3" width="11.8" height="1.2" fill="#444"/><g fill="#444"><rect x="2.4" y="5.6" width="2" height="1.8"/><rect x="5.5" y="5.6" width="2" height="1.8"/><rect x="8.6" y="5.6" width="2" height="1.8"/><rect x="2.4" y="8.6" width="2" height="1.8"/><rect x="5.5" y="8.6" width="2" height="1.8"/><rect x="8.6" y="8.6" width="2" height="3.4"/><rect x="2.4" y="10.6" width="2" height="1.4"/><rect x="5.5" y="10.6" width="2" height="1.4"/></g></svg></div>
<div class="inp" style="left:1285px;top:1039px;width:227px"><div class="v" style="right:28.5px">500 000,00</div><div class="cd"></div><svg class="a" style="right:7px;top:7px" width="13" height="14" viewBox="0 0 13 14"><rect x="0.6" y="0.6" width="11.8" height="12.8" rx="1" fill="none" stroke="#444" stroke-width="1.2"/><rect x="0.6" y="3" width="11.8" height="1.2" fill="#444"/><g fill="#444"><rect x="2.4" y="5.6" width="2" height="1.8"/><rect x="5.5" y="5.6" width="2" height="1.8"/><rect x="8.6" y="5.6" width="2" height="1.8"/><rect x="2.4" y="8.6" width="2" height="1.8"/><rect x="5.5" y="8.6" width="2" height="1.8"/><rect x="8.6" y="8.6" width="2" height="3.4"/><rect x="2.4" y="10.6" width="2" height="1.4"/><rect x="5.5" y="10.6" width="2" height="1.4"/></g></svg></div>
<div class="inp" style="left:1285px;top:1079px;width:227px"><div class="v" style="right:28.5px">700 000,00</div><div class="cd"></div><svg class="a" style="right:7px;top:7px" width="13" height="14" viewBox="0 0 13 14"><rect x="0.6" y="0.6" width="11.8" height="12.8" rx="1" fill="none" stroke="#444" stroke-width="1.2"/><rect x="0.6" y="3" width="11.8" height="1.2" fill="#444"/><g fill="#444"><rect x="2.4" y="5.6" width="2" height="1.8"/><rect x="5.5" y="5.6" width="2" height="1.8"/><rect x="8.6" y="5.6" width="2" height="1.8"/><rect x="2.4" y="8.6" width="2" height="1.8"/><rect x="5.5" y="8.6" width="2" height="1.8"/><rect x="8.6" y="8.6" width="2" height="3.4"/><rect x="2.4" y="10.6" width="2" height="1.4"/><rect x="5.5" y="10.6" width="2" height="1.4"/></g></svg></div>


</body></html>
